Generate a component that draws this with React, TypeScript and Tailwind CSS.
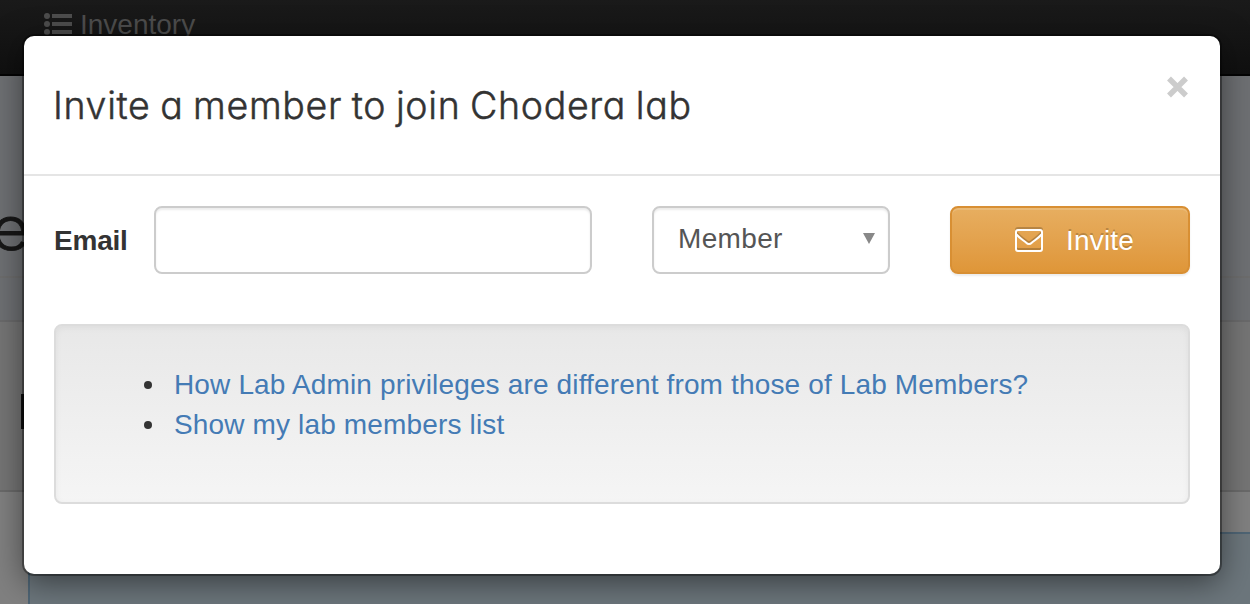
const links = [
  "How Lab Admin privileges are different from those of Lab Members?",
  "Show my lab members list",
];

function Backdrop() {
  return (
    <div className="flex h-[604px] w-full flex-col overflow-hidden bg-[#808080]">
      <div className="flex h-[76px] shrink-0 border-b-2 border-[#040404] bg-linear-to-b from-[#1a1a1a] to-[#101010] pl-[44px] text-[#4d4d4d]">
        <div className="flex h-12 items-center gap-2">
          <svg width="28" height="24" viewBox="0 0 28 24" fill="currentColor">
            <circle cx="3" cy="4" r="3" />
            <circle cx="3" cy="12" r="3" />
            <circle cx="3" cy="20" r="3" />
            <path d="M8 2h20v4H8zM8 10h20v4H8zM8 18h20v4H8z" />
          </svg>
          <span className="pt-px text-[28px]">Inventory</span>
        </div>
      </div>
      <div className="h-[202px] shrink-0 border-b-2 border-[#6d6d6d] bg-[#6e7073]">
        <div className="mt-[112px] -ml-[9px] w-[36px] origin-left scale-x-110 font-['Inter',sans-serif] text-[61px] leading-[80px] font-light text-[#171717] [-webkit-text-stroke:0.8px_#171717]">e</div>
      </div>
      <div className="h-[44px] shrink-0 border-b-2 border-[#6a6a6b] bg-[#6e7073]" />
      <div className="h-[170px] shrink-0 border-b-2 border-[#6a6a6a] bg-[#757575] pt-[72px] pl-[21px]">
        <div className="h-[35px] w-[8px] bg-[#101010]" />
      </div>
      <div className="h-[40px] shrink-0" />
      <div className="ml-[28px] grow border-t-2 border-l-2 border-[#4f6575] bg-[#6c767c]" />
    </div>
  );
}

export default function App() {
  return (
    <main className="relative h-[604px] w-full overflow-hidden font-['Liberation_Sans',sans-serif] text-[#333]">
      <Backdrop />
      <section className="absolute top-[36px] left-[24px] flex h-[538px] w-[1196px] flex-col rounded-[10px] bg-white shadow-[0_0_0_2px_rgba(0,0,0,0.35),0_8px_32px_rgba(0,0,0,0.5)]">
        <header className="flex h-[140px] shrink-0 justify-between border-b-2 border-[#e5e5e5] px-[30px]">
          <h1 className="-ml-px pt-[40px] font-['Inter',sans-serif] text-[37.5px] leading-[60px] font-light tracking-[0.66px] [-webkit-text-stroke:0.5px_#333] [font-feature-settings:'cv11'] [word-spacing:-1.5px]">
            Invite a member to join Chodera lab
          </h1>
          <button aria-label="Close" className="mt-[40px] mr-[2px] h-[22px] w-[21px] text-[#ccc]">
            <svg width="21" height="22" viewBox="0 0 21 22" stroke="currentColor" strokeWidth="5.5">
              <path d="M2 2.500l17 17M19 2.500l-17 17" />
            </svg>
          </button>
        </header>
        <form className="flex h-[98px] shrink-0 items-end px-[30px] text-[28px]">
          <label className="flex h-[68px] w-[100px] items-center pt-[2px] font-bold tracking-[-0.2px]">Email</label>
          <input className="h-[68px] w-[438px] rounded-[8px] border-2 border-[#ccc] px-3 shadow-[inset_0_2px_2px_rgba(0,0,0,0.075)] outline-none" />
          <div className="ml-[60px] flex h-[68px] w-[238px] items-center justify-between rounded-[8px] border-2 border-[#ccc] pr-[13px] pb-[4px] pl-[24px] text-[#555] shadow-[inset_0_2px_2px_rgba(0,0,0,0.075)]">
            <span className="pt-[2px] tracking-[0.35px]">Member</span>
            <svg width="12" height="11" viewBox="0 0 12 11" fill="#888">
              <path d="M0 0h12L6 11z" />
            </svg>
          </div>
          <button className="ml-[60px] flex h-[68px] w-[240px] items-center rounded-[8px] border-2 border-[#d88f33] bg-linear-to-b from-[#e7ae60] to-[#df9638] pl-[63px] text-white shadow-[inset_0_2px_0_rgba(255,255,255,0.15),0_2px_2px_rgba(0,0,0,0.075)] text-shadow-[0_-2px_0_rgba(0,0,0,0.2)]">
            <svg width="28" height="24" viewBox="0 0 28 24" fill="none" stroke="white" strokeWidth="2" className="mt-[2px] drop-shadow-[0_-2px_0_rgba(0,0,0,0.2)]">
              <rect x="1" y="1" width="26" height="21" rx="2" />
              <path d="M1.500 5.500c3 3.500 6.500 5.500 9.500 8 2 2 4 2 6 0 3-2.500 6.500-4.500 9.500-8" />
            </svg>
            <span className="ml-[23px] pt-[2px] tracking-[0.2px]">Invite</span>
          </button>
        </form>
        <div className="mx-[30px] mt-[50px] h-[180px] rounded-[8px] border-2 border-[#dcdcdc] bg-linear-to-b from-[#e8e8e8] to-[#f5f5f5] pt-[39px] shadow-[inset_0_2px_6px_rgba(0,0,0,0.05)]">
          <ul className="pl-[88px] text-[28px] leading-[40px] tracking-[0.15px]">
            {links.map((label) => (
              <li key={label} className="flex items-center">
                <span className="mr-[22px] size-[8px] rounded-full bg-[#333]" />
                <a className="text-[#447bb5]">{label}</a>
              </li>
            ))}
          </ul>
        </div>
      </section>
    </main>
  );
}
